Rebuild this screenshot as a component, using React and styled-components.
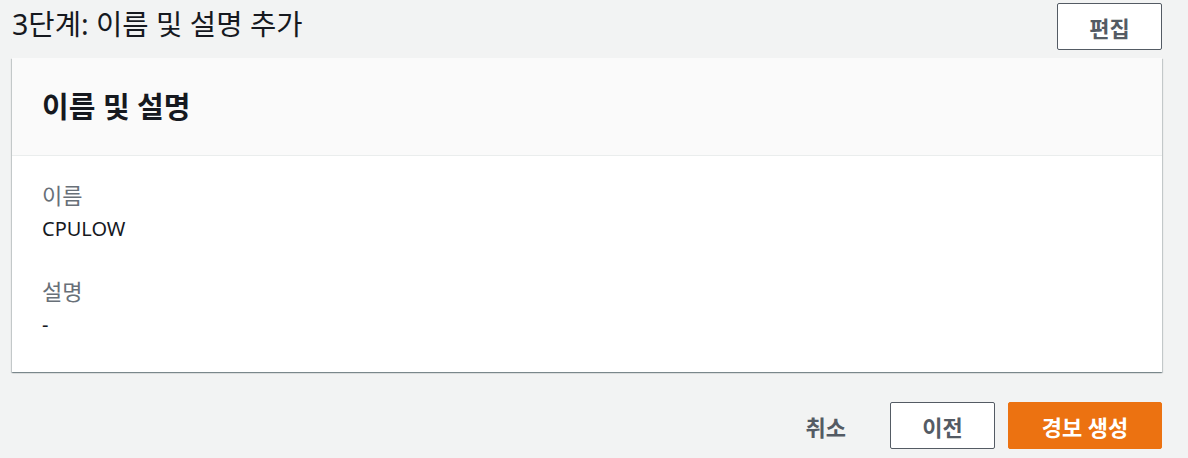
import React from "react";
import styled, { createGlobalStyle } from "styled-components";

const GlobalStyle = createGlobalStyle`
  * { box-sizing: border-box; }
  body {
    margin: 0;
    background: #f2f3f3;
    font-family: "Noto Sans", "Noto Sans CJK KR", sans-serif;
    color: #16191f;
  }
`;

const Page = styled.div`
  width: 1162px;
  padding: 3px 0 0 12px;
  display: flex;
  flex-direction: column;
`;

const TitleRow = styled.div`
  display: flex;
  align-items: center;
  justify-content: space-between;
  height: 47px;
`;

const Title = styled.h2`
  margin: 0 0 4px 0;
  font-size: 28.6px;
  font-weight: 400;
  line-height: 1.2;
  color: #16191f;
`;

const Button = styled.button`
  height: 47px;
  min-width: ${(p) => p.$w || 105}px;
  padding: 0 20px;
  border-radius: 2px;
  font-family: inherit;
  font-size: 22px;
  font-weight: 700;
  cursor: pointer;
  border: 1px solid ${(p) => (p.$primary ? "#ec7211" : "#545b64")};
  background: ${(p) => (p.$primary ? "#ec7211" : "#ffffff")};
  color: ${(p) => (p.$primary ? "#ffffff" : "#545b64")};
`;

const LinkButton = styled.button`
  height: 47px;
  padding: 0 31px;
  border: none;
  background: transparent;
  font-family: inherit;
  font-size: 22px;
  font-weight: 700;
  color: #545b64;
  cursor: pointer;
`;

const Card = styled.section`
  margin-top: 8px;
  background: #fff;
  box-shadow: 0 1px 1px 0 rgba(0, 28, 36, 0.3), 1px 1px 1px 0 rgba(0, 28, 36, 0.15),
    -1px 1px 1px 0 rgba(0, 28, 36, 0.15);
`;

const CardHeader = styled.div`
  height: 98px;
  display: flex;
  align-items: center;
  padding: 0 30px 4px;
  background: #fafafa;
  border-bottom: 1px solid #eaeded;
`;

const CardTitle = styled.h3`
  margin: 0;
  font-size: 29px;
  font-weight: 700;
  color: #16191f;
`;

const CardBody = styled.div`
  padding: 25px 30px 33px;
  display: flex;
  flex-direction: column;
  gap: 34px;
`;

const Field = styled.div`
  display: flex;
  flex-direction: column;
  gap: 6px;
`;

const Label = styled.div`
  font-size: 22px;
  line-height: 28px;
  color: #687078;
`;

const Value = styled.div`
  font-size: 20px;
  line-height: 28px;
  color: #16191f;
`;

const Actions = styled.div`
  display: flex;
  justify-content: flex-end;
  align-items: center;
  gap: 13px;
  margin-top: 30px;
`;

export default function App() {
  return (
    <>
      <GlobalStyle />
      <Page>
        <TitleRow>
          <Title>3단계: 이름 및 설명 추가</Title>
          <Button>편집</Button>
        </TitleRow>
        <Card>
          <CardHeader>
            <CardTitle>이름 및 설명</CardTitle>
          </CardHeader>
          <CardBody>
            <Field>
              <Label>이름</Label>
              <Value>CPULOW</Value>
            </Field>
            <Field>
              <Label>설명</Label>
              <Value>-</Value>
            </Field>
          </CardBody>
        </Card>
        <Actions>
          <LinkButton>취소</LinkButton>
          <Button>이전</Button>
          <Button $primary $w={154}>경보 생성</Button>
        </Actions>
      </Page>
    </>
  );
}
